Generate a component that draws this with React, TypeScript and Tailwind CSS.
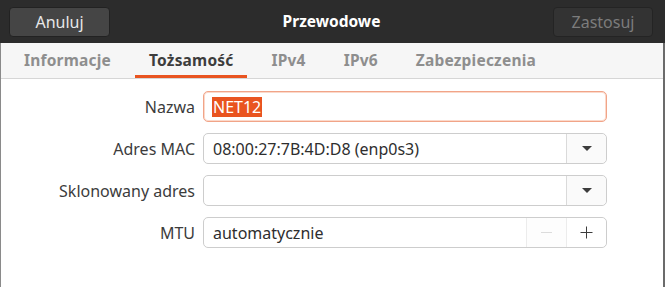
import React from "react";

const tabs = ["Informacje", "Tożsamość", "IPv4", "IPv6", "Zabezpieczenia"];

function Caret() {
  return (
    <svg width="12" height="6" viewBox="0 0 12 6">
      <path d="M1 0 L11 0 L6 5 Z" fill="#3c3c3c" />
    </svg>
  );
}

function Row({ label, children }: { label: string; children: React.ReactNode }) {
  return (
    <div className="flex items-center">
      <div className="w-[194px] shrink-0 text-right text-[16px] text-[#3c3c3c]">{label}</div>
      <div className="ml-[8px] w-[404px]">{children}</div>
    </div>
  );
}

export default function App() {
  return (
    <div
      className="flex h-[287px] w-[665px] flex-col overflow-hidden bg-white"
      style={{ fontFamily: "'Noto Sans', 'Open Sans', sans-serif" }}
    >
      <header className="flex h-[43px] shrink-0 items-center justify-between bg-[#2c2c2c] pl-[9px] pr-[12px]">
        <button className="mt-[1px] h-[30px] w-[101px] rounded-[4px] border border-[#222] bg-[#454545] text-[16px] text-[#e8e8e8]">
          Anuluj
        </button>
        <h1 className="text-[15.5px] font-bold text-white">Przewodowe</h1>
        <button className="h-[30px] w-[100px] rounded-[4px] border border-[#242424] bg-[#333333] text-[16px] text-[#7c7c7c]">
          Zastosuj
        </button>
      </header>

      <div className="flex flex-1 flex-col border-l border-r-2 border-l-[#8a8a8a] border-r-[#6b6b6b]">
        <nav className="flex h-[36px] shrink-0 items-stretch gap-[10px] border-b border-[#d6d6d6] bg-[#f6f6f6] pl-[9px]">
          {tabs.map((t) => {
            const active = t === "Tożsamość";
            return (
              <div
                key={t}
                className={`flex items-center border-b-[3px] px-[14px] pt-[3px] text-[15.5px] font-bold tracking-[0.2px] ${
                  active ? "border-[#e95420] text-[#3d3d3d]" : "border-transparent text-[#8e8e8e]"
                }`}
              >
                {t}
              </div>
            );
          })}
        </nav>

        <div className="flex flex-col gap-[11px] pt-[12px]">
          <Row label="Nazwa">
            <div className="flex h-[31px] items-center rounded-[5px] border border-[#f1a488] bg-white px-[8px] shadow-[inset_0_0_0_1px_#fbd9cb]">
              <span className="bg-[#e95420] px-[1px] text-[16px] leading-[20px] text-white">NET12</span>
            </div>
          </Row>
          <Row label="Adres MAC">
            <div className="flex h-[31px] items-stretch rounded-[5px] border border-[#cdcdcd] bg-white">
              <div className="flex flex-1 items-center px-[9px] text-[16px] text-[#2e2e2e]">08:00:27:7B:4D:D8 (enp0s3)</div>
              <div className="flex w-[40px] items-center justify-center rounded-r-[5px] border-l border-[#dadada] bg-[#fafafa]">
                <Caret />
              </div>
            </div>
          </Row>
          <Row label="Sklonowany adres">
            <div className="flex h-[31px] items-stretch rounded-[5px] border border-[#cdcdcd] bg-white">
              <div className="flex-1" />
              <div className="flex w-[40px] items-center justify-center rounded-r-[5px] border-l border-[#dadada] bg-[#fafafa]">
                <Caret />
              </div>
            </div>
          </Row>
          <Row label="MTU">
            <div className="flex h-[31px] items-stretch rounded-[5px] border border-[#cdcdcd] bg-white">
              <div className="flex flex-1 items-center px-[9px] text-[16px] text-[#2e2e2e]">automatycznie</div>
              <div className="flex w-[40px] items-center justify-center border-l border-[#ececec] bg-[#fdfdfd]">
                <svg width="13" height="13" viewBox="0 0 13 13">
                  <path d="M1 6.5 H12" stroke="#dcdcdc" strokeWidth="1" />
                </svg>
              </div>
              <div className="flex w-[40px] items-center justify-center rounded-r-[5px] border-l border-[#ececec] bg-white">
                <svg width="13" height="13" viewBox="0 0 13 13">
                  <path d="M0.5 6.5 H12.5 M6.5 0.5 V12.5" stroke="#3c3c3c" strokeWidth="1" />
                </svg>
              </div>
            </div>
          </Row>
        </div>
      </div>
    </div>
  );
}
